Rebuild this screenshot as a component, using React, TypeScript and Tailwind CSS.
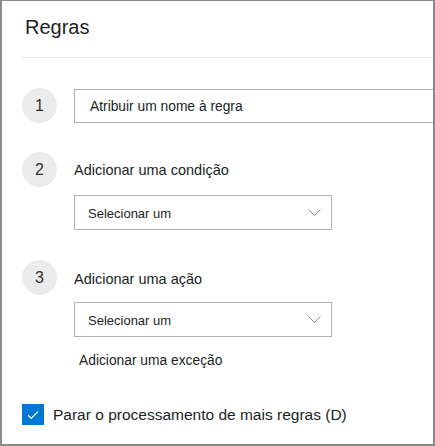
const font = { fontFamily: '"Liberation Sans", Arial, sans-serif' };

function StepBadge({ n }: { n: number }) {
  return (
    <div className="flex h-[35px] w-[35px] shrink-0 items-center justify-center rounded-full bg-[#ebebeb] text-[16px] text-[#323130]">
      {n}
    </div>
  );
}

function Chevron() {
  return (
    <svg width="13" height="7" viewBox="0 0 13 7" fill="none">
      <path d="M0.5 0.5 L6.5 6.5 L12.5 0.5" stroke="#8a8886" strokeWidth="1" />
    </svg>
  );
}

function Select() {
  return (
    <div className="flex h-[35px] w-[258px] items-center justify-between border border-[#b3b0ad] pl-[13px] pr-[10px] text-[13px] text-[#201f1e]">
      <span className="pt-[2px]">Selecionar um</span>
      <Chevron />
    </div>
  );
}

export default function App() {
  return (
    <div
      className="h-[446px] w-[435px] overflow-hidden border-x-2 border-b-2 border-t border-[#8a8a8a] bg-white text-[#201f1e]"
      style={font}
    >
      <div className="pl-[23px] pt-[11px]">
        <h1 className="h-[30px] text-[20px] leading-[30px]">Regras</h1>
      </div>
      <div className="ml-[20px] mt-[15px] border-b border-[#e8e8e8]" />

      <div className="pl-[20px]">
        {/* step 1 */}
        <div className="mt-[30px] flex items-center gap-[17px]">
          <StepBadge n={1} />
          <div className="flex h-[34px] w-[380px] shrink-0 items-center border border-[#b3b0ad] pl-[15px] pt-[3px] text-[13.8px]">
            Atribuir um nome à regra
          </div>
        </div>

        {/* step 2 */}
        <div className="mt-[29px] flex items-center gap-[17px]">
          <StepBadge n={2} />
          <span className="pt-[3px] text-[14.5px]">Adicionar uma condição</span>
        </div>
        <div className="ml-[52px] mt-[8px]">
          <Select />
        </div>

        {/* step 3 */}
        <div className="mt-[30px] flex items-center gap-[17px]">
          <StepBadge n={3} />
          <span className="pt-[4px] text-[14.5px]">Adicionar uma ação</span>
        </div>
        <div className="ml-[52px] mt-[7px]">
          <Select />
        </div>
        <div className="ml-[57px] mt-[15px] text-[13.8px] leading-[18px]">
          Adicionar uma exceção
        </div>

        {/* stop processing */}
        <div className="mt-[33px] flex items-center gap-[9px]">
          <div className="flex h-[21px] w-[22px] items-center justify-center bg-[#0078d4]">
            <svg width="12" height="10" viewBox="0 0 12 10" fill="none">
              <path d="M1 5.2 L4.3 8.4 L11 1.6" stroke="#fff" strokeWidth="1.2" />
            </svg>
          </div>
          <span className="text-[15.5px]">Parar o processamento de mais regras (D)</span>
        </div>
      </div>
    </div>
  );
}
